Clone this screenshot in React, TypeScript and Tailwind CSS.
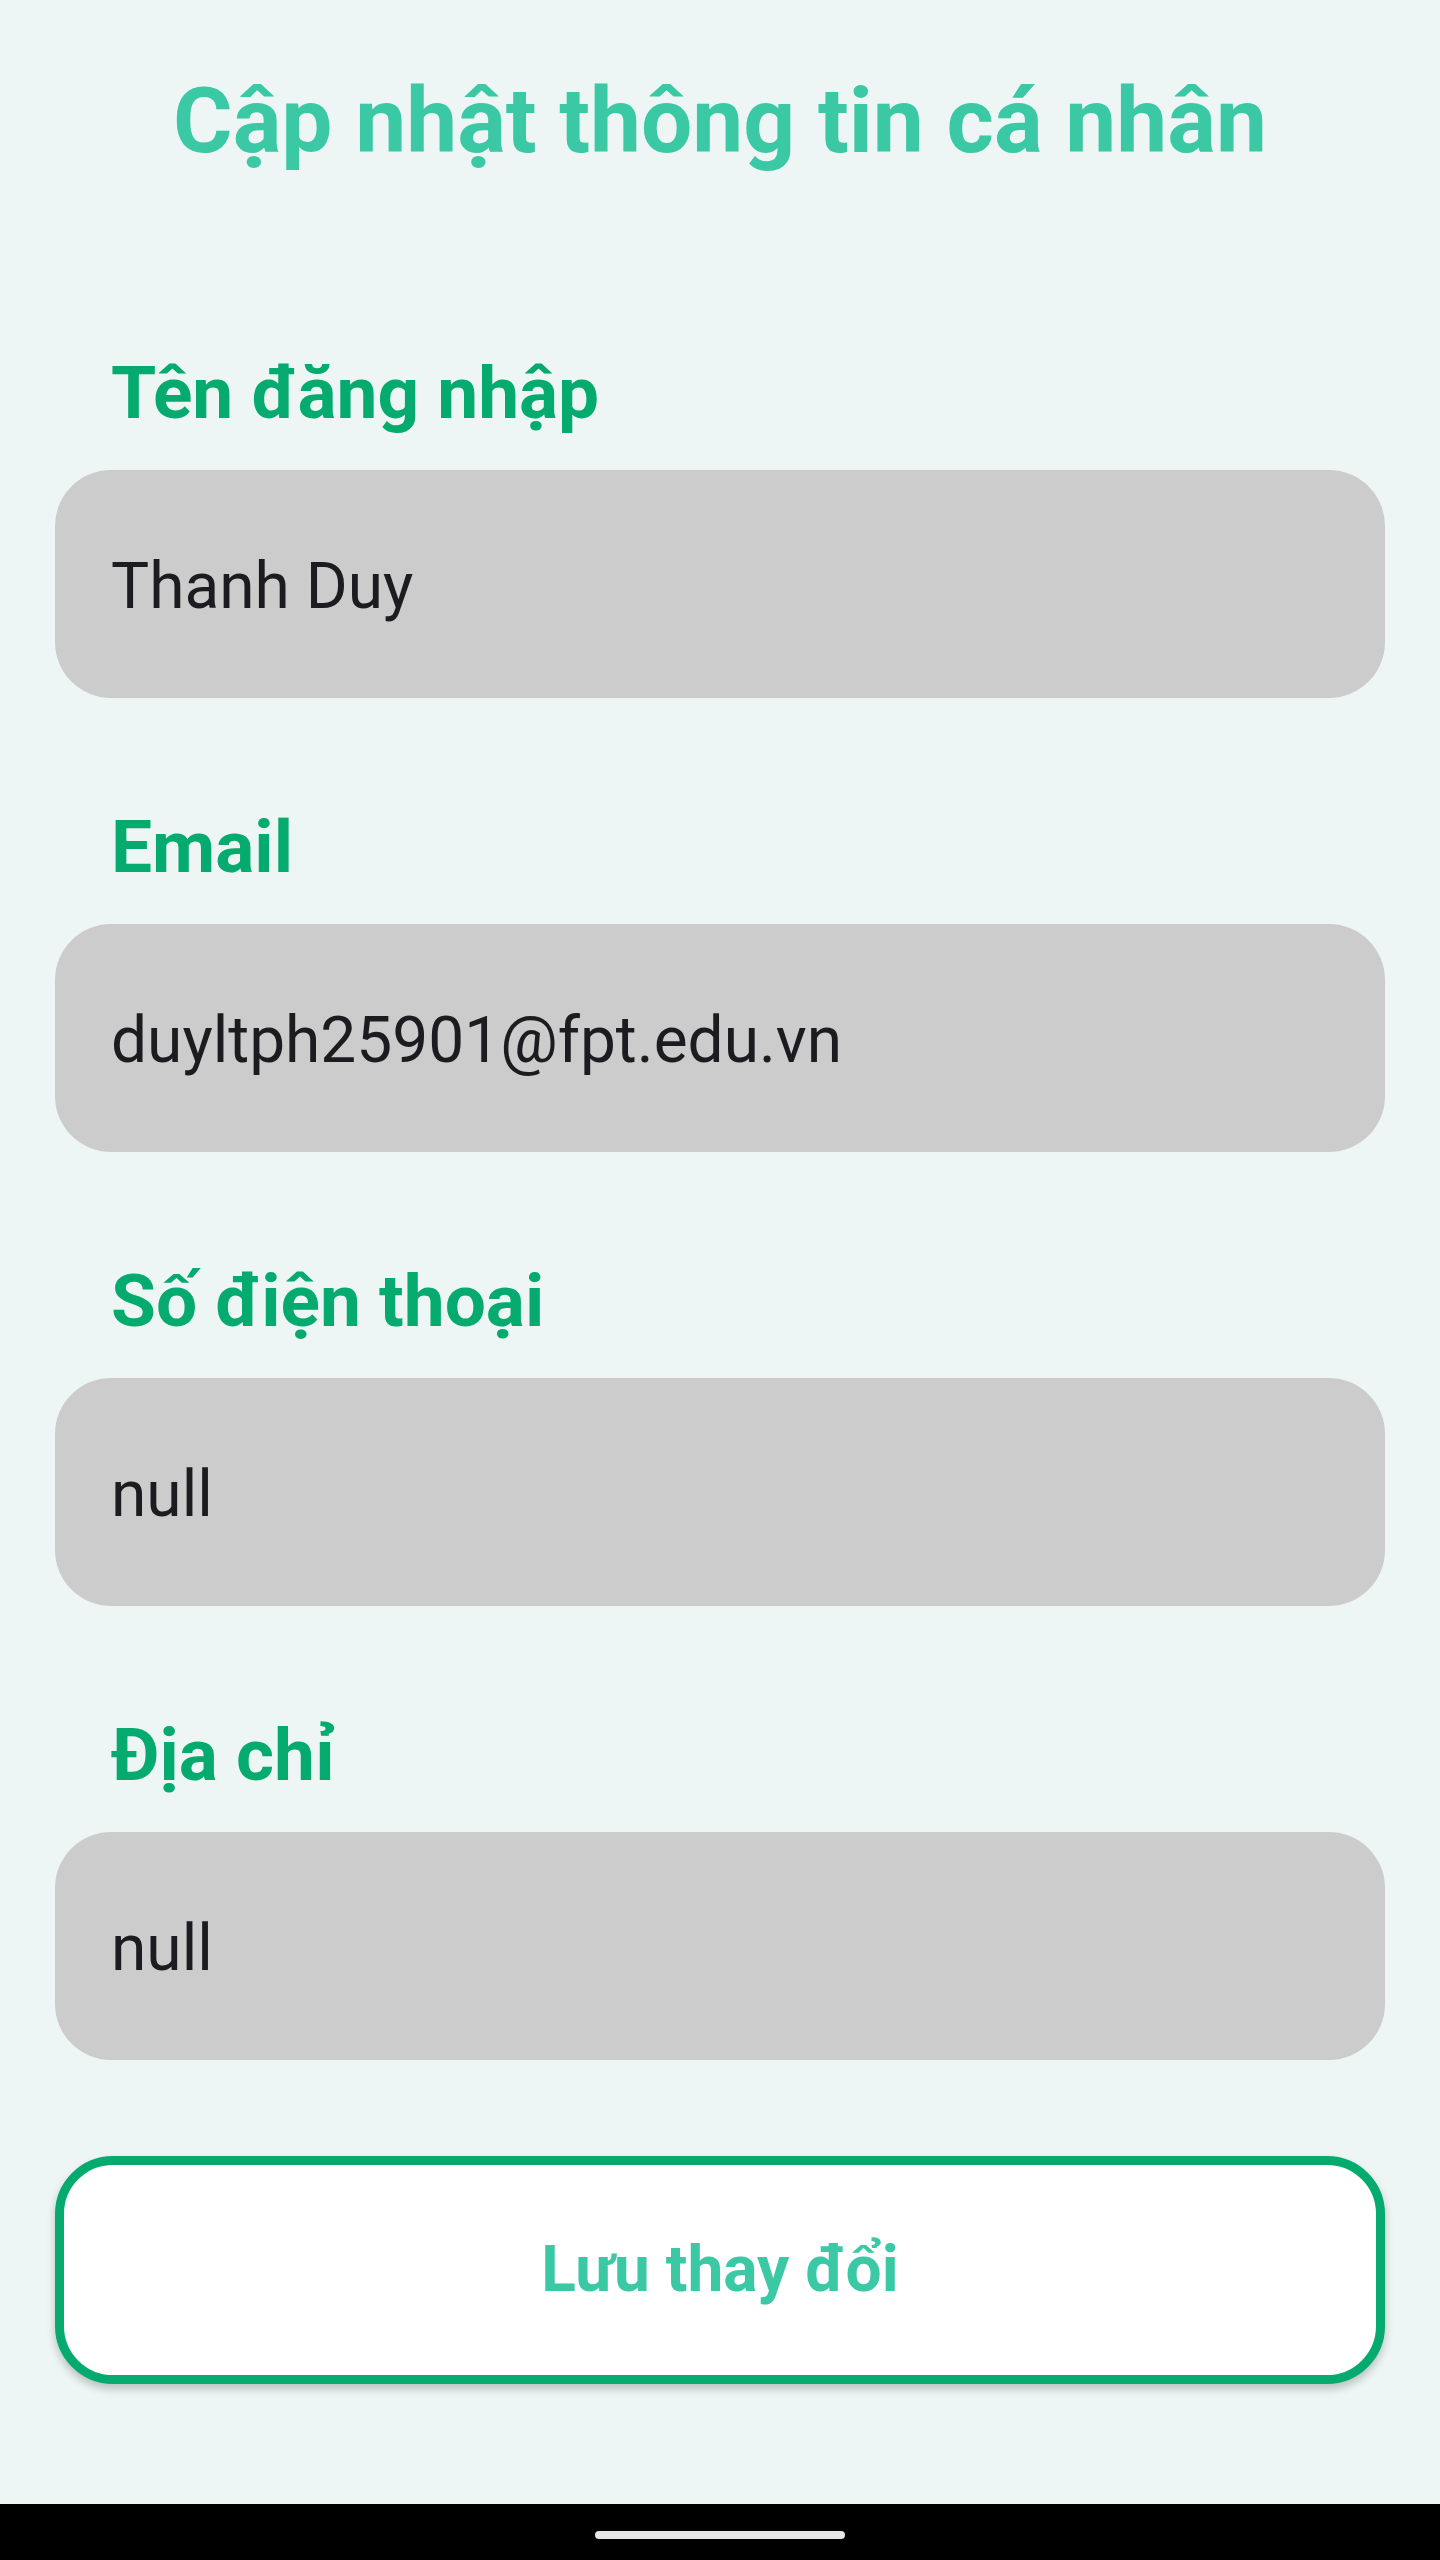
const FIELDS = [
  { label: "Tên đăng nhập", value: "Thanh Duy" },
  { label: "Email", value: "duyltph25901@fpt.edu.vn" },
  { label: "Số điện thoại", value: "null" },
  { label: "Địa chỉ", value: "null" },
];

function Field({ label, value }: { label: string; value: string }) {
  return (
    <div className="flex flex-col">
      <span className="pl-[56px] mb-[40px] text-[73px] leading-none font-bold text-[#05ab6e]">
        {label}
      </span>
      <div className="h-[228px] rounded-[56px] bg-[#cccccc] flex items-center pl-[56px] pt-[6px]">
        <span className="text-[64px] leading-none text-[#1c1b1f]">{value}</span>
      </div>
    </div>
  );
}

export default function App() {
  return (
    <div
      className="w-[1440px] h-[2560px] flex flex-col bg-[#edf6f5]"
      style={{ fontFamily: "Roboto, 'Noto Sans', sans-serif" }}
    >
      <main className="flex-1 flex flex-col px-[55px]">
        {/* Title */}
        <h1 className="pt-[76px] mb-[190px] text-center text-[91px] leading-none font-bold text-[#3ac8a5]">
          Cập nhật thông tin cá nhân
        </h1>

        <div className="flex flex-col gap-[113px]">
          {FIELDS.map((f) => (
            <Field key={f.label} label={f.label} value={f.value} />
          ))}
        </div>

        {/* Save button */}
        <button className="mt-[96px] h-[228px] rounded-[58px] border-[9px] border-[#05ab6e] bg-white shadow-[0_5px_8px_rgba(0,0,0,0.22)] flex items-center justify-center">
          <span className="text-[64px] leading-none font-bold text-[#3ac8a5]">Lưu thay đổi</span>
        </button>
      </main>

      {/* Android gesture bar */}
      <div className="h-[56px] bg-black flex justify-center pt-[27px]">
        <div className="w-[250px] h-[8px] rounded-full bg-[#e6e6e6]" />
      </div>
    </div>
  );
}
